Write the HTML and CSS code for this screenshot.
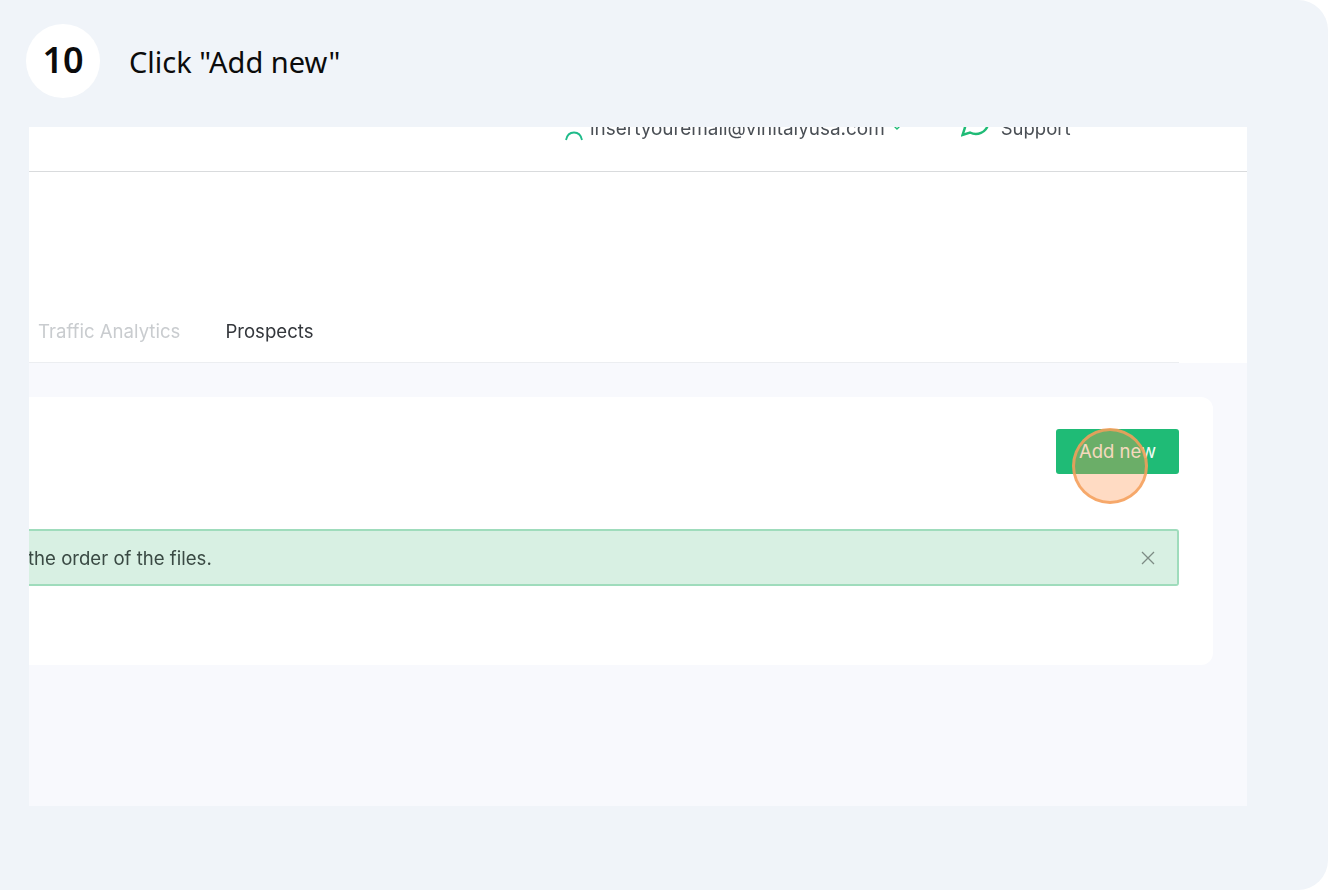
FILE: index.html
```html
<!DOCTYPE html>
<html lang="en">
<head>
<meta charset="utf-8">
<title>Click "Add new"</title>
<link rel="stylesheet" href="styles.css">
</head>
<body>
<main class="step">
  <header class="step-head">
    <div class="step-num">10</div>
    <h1 class="step-title">Click "Add new"</h1>
  </header>
  <section class="shot">
    <div class="topbar">
      <div class="topbar-inner">
        <div class="account">
          <svg class="icon-user" width="18" height="30" viewBox="0 0 18 30"><path d="M1 27c1-5 4-7.500 8-7.500s7 2.500 8 7.500" fill="none" stroke="#1fbb8a" stroke-width="1.800"/></svg>
          <span class="account-mail">insertyouremail@vinitalyusa.com</span>
          <svg class="icon-caret" width="8" height="6" viewBox="0 0 8 6"><path d="M1 1l3 3 3-3" fill="none" stroke="#1fbb76" stroke-width="1.4"/></svg>
        </div>
        <div class="support">
          <svg class="icon-chat" width="30" height="30" viewBox="0 0 30 30"><path d="M15 2a12.500 12.500 0 0 0-11 18.500L1.500 28l7.500-2.500A12.500 12.500 0 1 0 15 2z" fill="none" stroke="#1fbb76" stroke-width="2.400"/></svg>
          <span class="support-label">Support</span>
        </div>
      </div>
    </div>
    <div class="hero">
      <nav class="tabs">
        <span class="tab tab-muted">Traffic Analytics</span>
        <span class="tab tab-active">Prospects</span>
      </nav>
    </div>
    <div class="content">
      <div class="card">
        <div class="card-actions">
          <button class="btn-add" type="button">Add new</button>
        </div>
        <div class="alert">
          <span class="alert-text">the order of the files.</span>
          <svg class="alert-close" width="14" height="14" viewBox="0 0 14 14"><path d="M1 1l12 12M13 1L1 13" fill="none" stroke="#7d8b84" stroke-width="1.300"/></svg>
        </div>
      </div>
    </div>
    <div class="click-spot"></div>
  </section>
</main>
</body>
</html>
```
FILE: styles.css
```css
* { box-sizing: border-box; }
html, body { margin: 0; height: 100%; background: #fff; }
body { overflow: hidden; }

.step {
  height: 890px;
  background: #f0f4f9;
  border-radius: 0 30px 30px 0;
  display: flex;
  flex-direction: column;
  font-family: "Noto Sans", sans-serif;
}

.step-head {
  display: flex;
  align-items: flex-start;
  gap: 29px;
  padding: 24px 0 0 26px;
  height: 127px;
  flex: none;
}
.step-num {
  width: 74px;
  height: 74px;
  border-radius: 50%;
  background: #fff;
  display: flex;
  align-items: center;
  justify-content: center;
  font-size: 36px;
  font-weight: 600;
  color: #0b0b0b;
  padding-bottom: 4px;
}
.step-title {
  margin: 0;
  font-size: 29px;
  font-weight: 400;
  line-height: 74px;
  padding-top: 1px;
  color: #0b0b0b;
}

.shot {
  position: relative;
  margin-left: 29px;
  width: 1218px;
  height: 679px;
  background: #f8f9fd;
  overflow: hidden;
  display: flex;
  flex-direction: column;
  font-family: "Inter", "Roboto", sans-serif;
}

.topbar {
  height: 45px;
  flex: none;
  background: #fff;
  border-bottom: 1px solid #d9dbdd;
  overflow: hidden;
}
.topbar-inner {
  display: flex;
  align-items: center;
  margin-top: -14px;
  padding-left: 536px;
  gap: 60px;
  height: 30px;
  filter: blur(0.4px);
}
.account, .support { display: flex; align-items: center; }
.icon-user { margin-right: 7px; }
.account-mail { font-size: 18.900px; color: #4a4f55; }
.icon-caret { margin-left: 8px; }
.icon-chat { margin-right: 10px; margin-top: -12px; }
.support-label { font-size: 18.500px; color: #4a4f55; }

.hero {
  height: 191px;
  flex: none;
  background: #fff;
  padding-right: 68px;
  display: flex;
  flex-direction: column;
  justify-content: flex-end;
}
.tabs {
  display: flex;
  gap: 45px;
  height: 62px;
  padding-left: 9px;
  align-items: center;
  border-bottom: 1px solid #eceef1;
  padding-bottom: 1px;
}
.tab { font-size: 18.600px; filter: blur(0.4px); }
.tab-muted { color: #c9cccf; }
.tab-active { color: #34373c; }

.content { padding-top: 34px; }
.card {
  width: 1184px;
  height: 268px;
  background: #fff;
  border-radius: 0 12px 12px 0;
  padding: 32px 34px 0 0;
}
.card-actions { display: flex; justify-content: flex-end; }
.btn-add {
  width: 123px;
  height: 45px;
  border: 0;
  border-radius: 3px;
  background: #1fbb76;
  color: #f2fbf6;
  font-family: inherit;
  font-size: 18.500px;
  padding: 0 0 2px;
}
.alert {
  margin-top: 55px;
  height: 57px;
  background: #d8f0e3;
  border: 2px solid #9fdcbc;
  border-left: 0;
  border-radius: 0 3px 3px 0;
  display: flex;
  align-items: center;
  justify-content: space-between;
  padding-right: 22px;
}
.alert-text { font-size: 18.600px; color: #3a4a44; margin-left: -1px; filter: blur(0.4px); }

.click-spot {
  position: absolute;
  left: 1043px;
  top: 301px;
  width: 76px;
  height: 76px;
  border-radius: 50%;
  background: rgba(255, 150, 80, 0.34);
  border: 3px solid rgba(244, 160, 90, 0.85);
}
```
